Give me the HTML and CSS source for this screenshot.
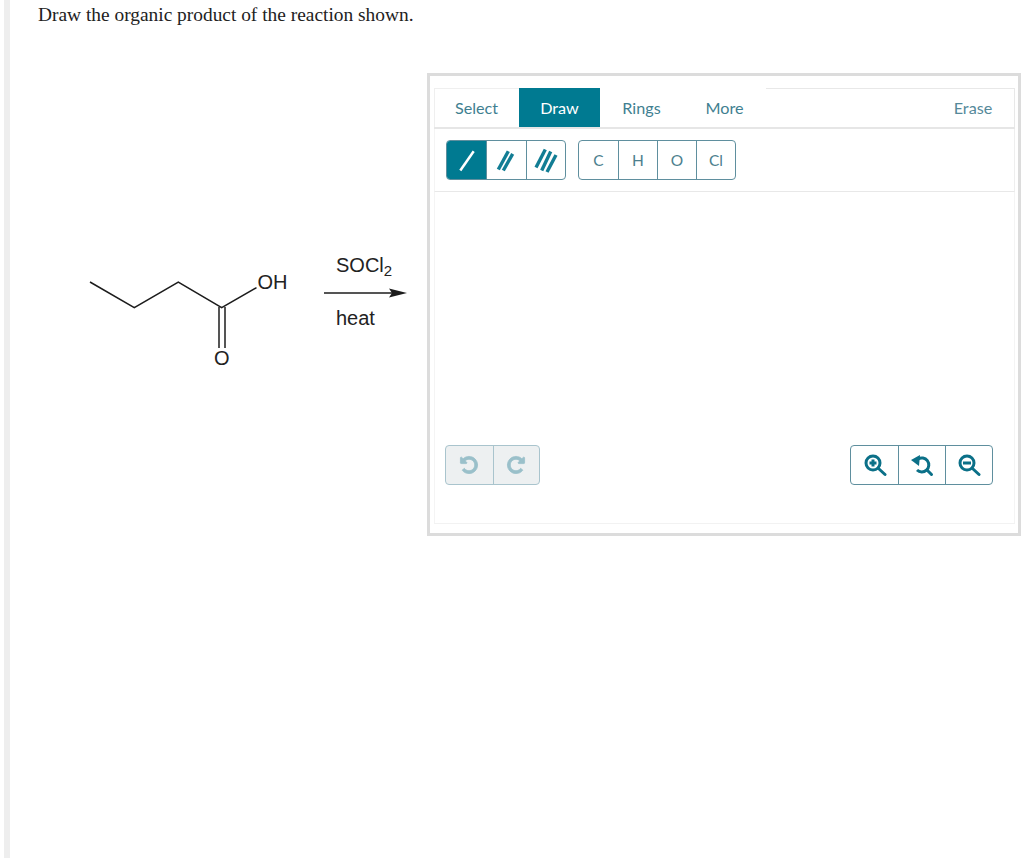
FILE: index.html
```html
<!DOCTYPE html>
<html lang="en">
<head>
<meta charset="utf-8">
<title>Draw the organic product</title>
<link rel="stylesheet" href="styles.css">
</head>
<body>
<main class="page">
  <p class="question">Draw the organic product of the reaction shown.</p>
  <div class="content">
    <svg class="reaction" width="417" height="300" viewBox="0 0 417 300">
      <g transform="translate(-10,-73)">
        <polyline class="bond" points="90,282 134.3,307.7 178.3,282 221.7,307.7 256.5,287.7"/>
        <line class="bond" x1="219" y1="307" x2="219" y2="348"/>
        <line class="bond" x1="225" y1="307" x2="225" y2="348"/>
        <line class="bond" x1="324" y1="293" x2="392" y2="293"/>
        <polygon class="head" points="389,288.5 407,293 389,297.5 392,293"/>
        <text class="chem" x="257.500" y="289">OH</text>
        <text class="chem" x="214" y="365">O</text>
        <text class="chem" x="336" y="272">SOCl<tspan class="sub" dy="4">2</tspan></text>
        <text class="chem" x="336" y="325">heat</text>
      </g>
    </svg>
    <section class="panel">
      <div class="editor">
        <nav class="tabs">
          <button class="tab tab-first">Select</button>
          <button class="tab tab-active">Draw</button>
          <button class="tab">Rings</button>
          <button class="tab">More</button>
          <span class="tab-fill"><button class="tab tab-erase">Erase</button></span>
        </nav>
        <div class="toolbar">
          <div class="group">
            <button class="tool bond-tool tool-active"><svg width="20" height="24" viewBox="0 0 20 24"><line class="ico-white" x1="3.300" y1="22.500" x2="16.700" y2="3.200"/></svg></button>
            <button class="tool bond-tool"><svg width="20" height="24" viewBox="0 0 20 24"><line class="ico" x1="2.300" y1="21.500" x2="12.300" y2="3.200"/><line class="ico" x1="7.300" y1="22.500" x2="16.700" y2="5.800"/></svg></button>
            <button class="tool bond-tool"><svg width="24" height="26" viewBox="0 0 24 26"><line class="ico" x1="2" y1="20.500" x2="11.300" y2="2.500"/><line class="ico" x1="7.700" y1="23.500" x2="16.700" y2="4.500"/><line class="ico" x1="13" y1="25" x2="22" y2="8"/></svg></button>
          </div>
          <div class="group">
            <button class="tool atom">C</button>
            <button class="tool atom">H</button>
            <button class="tool atom">O</button>
            <button class="tool atom">Cl</button>
          </div>
        </div>
        <div class="canvas">
          <div class="group group-off">
            <button class="tool hist off"><svg class="flip-undo" width="20" height="20" viewBox="0 0 1792 1792"><path class="fill" d="M1664 896q0 156-61 298t-164 245-245 164-298 61q-147 0-284.500-55.500t-244.500-156.500l-130 129q-29 31-70 14-39-17-39-59v-448q0-26 19-45t45-19h448q42 0 59 40 17 39-14 69l-137 138q71 66 161 102t187 36q104 0 198.500-40.500t163.500-109.500 109.500-163.500 40.500-198.500-40.500-198.500-109.500-163.500-163.500-109.500-198.500-40.500q-119 0-225 52t-179 147q-7 10-23 12-14 0-25-9l-137-138q-9-8-9.500-20.500t7.500-22.500q109-132 264-204.500t327-72.500q156 0 298 61t245 164 164 245 61 298z"/></svg></button>
            <button class="tool hist off"><svg class="flip-redo" width="20" height="20" viewBox="0 0 1792 1792"><path class="fill" d="M1664 896q0 156-61 298t-164 245-245 164-298 61q-147 0-284.500-55.500t-244.500-156.500l-130 129q-29 31-70 14-39-17-39-59v-448q0-26 19-45t45-19h448q42 0 59 40 17 39-14 69l-137 138q71 66 161 102t187 36q104 0 198.500-40.500t163.500-109.500 109.500-163.500 40.500-198.500-40.500-198.500-109.500-163.500-163.500-109.500-198.500-40.500q-119 0-225 52t-179 147q-7 10-23 12-14 0-25-9l-137-138q-9-8-9.500-20.500t7.500-22.500q109-132 264-204.500t327-72.500q156 0 298 61t245 164 164 245 61 298z"/></svg></button>
          </div>
          <div class="group">
            <button class="tool zoom"><svg width="24" height="24" viewBox="0 0 24 24"><circle class="lens" cx="10" cy="10" r="7"/><line class="handle" x1="15.500" y1="15.500" x2="22" y2="21.500"/><path class="mark" d="M6.500 10h7M10 6.500v7"/></svg></button>
            <button class="tool zoom"><svg width="24" height="24" viewBox="0 0 24 24"><path class="lens" d="M8 6 A7 7 0 1 1 7 17"/><line class="handle" x1="17" y1="17" x2="21.500" y2="21.500"/><polygon class="solid" points="1,7 10,2 9,13"/></svg></button>
            <button class="tool zoom"><svg width="24" height="24" viewBox="0 0 24 24"><circle class="lens" cx="10" cy="10" r="7"/><line class="handle" x1="15.500" y1="15.500" x2="22" y2="21.500"/><path class="mark" d="M6 10h8"/></svg></button>
          </div>
        </div>
      </div>
    </section>
  </div>
</main>
</body>
</html>
```
FILE: styles.css
```css
* { box-sizing: border-box; }
html, body { margin: 0; height: 100%; background: #fff; overflow: hidden; }
.page {
  height: 858px;
  margin-left: 4px;
  border-left: 6px solid #eeeeee;
  padding-top: 3px;
}
.question {
  margin: 0 0 0 28px;
  height: 70px;
  font: 19.4px/24px "Liberation Serif", serif;
  color: #222;
}
.content { display: flex; align-items: flex-start; }
.reaction { flex: none; display: block; }
.bond { fill: none; stroke: #1c1c1c; stroke-width: 1.5; }
.head { fill: #1c1c1c; }
.chem { font: 20px "Liberation Sans", sans-serif; fill: #222; }
.sub { font-size: 15px; }
.panel {
  width: 594px;
  height: 463px;
  border: 3px solid #dcdcdc;
  padding: 12px 3px 9px 4px;
  background: #fff;
}
.editor {
  height: 100%;
  display: flex;
  flex-direction: column;
  border-bottom: 1px solid #f2f2f2;
}
button { font-family: Lato, sans-serif; margin: 0; padding: 0; background: none; border: 0; }
.tabs { display: flex; height: 41px; border-bottom: 2px solid #e6e6e6; }
.tab {
  width: 83px;
  height: 39px;
  font-size: 16.2px;
  color: #3f7f91;
  background: #fff;
}
.tab-first {
  width: 85px;
  padding: 0 1px 1px 0;
  border-left: 1px solid #efefef;
  border-top: 1px solid #efefef;
}
.tab-active { width: 81px; background: #007a91; color: #fff; }
.tab-fill {
  flex: 1;
  display: flex;
  justify-content: flex-end;
  border-top: 1px solid #e8e8e8;
  border-right: 1px solid #e8e8e8;
}
.tab-erase { width: 82px; height: 38px; padding-bottom: 1px; color: #55899a; }
.toolbar {
  height: 63px;
  display: flex;
  align-items: center;
  gap: 12px;
  padding-left: 11px;
  border-bottom: 1px solid #e8e8e8;
  border-right: 1px solid #eeeeee;
  border-left: 1px solid #f4f4f4;
}
.group {
  display: flex;
  border: 1px solid #5f8f9e;
  border-radius: 4px;
  overflow: hidden;
  background: #fff;
}
.tool {
  height: 38px;
  display: flex;
  align-items: center;
  justify-content: center;
  border-left: 1px solid #5f8f9e;
  font-size: 15.5px;
  color: #4d7f8e;
}
.tool:first-child { border-left: 0; }
.bond-tool { width: 39.330px; }
.tool-active { background: #007a91; }
.atom { width: 39px; }
.ico-white { stroke: #fff; stroke-width: 2.500; }
.ico { stroke: #127d94; stroke-width: 3.400; }
.canvas {
  flex: 1;
  display: flex;
  align-items: flex-end;
  justify-content: space-between;
  padding: 0 21px 38px 10px;
  border-right: 1px solid #f4f4f4;
  border-left: 1px solid #f4f4f4;
}
.hist { width: 46.500px; }
.zoom { width: 47px; }
.flip-undo { transform: scaleY(-1); }
.flip-redo { transform: scale(-1, -1); }
.group-off { border-color: #a9c4cd; background: #edf0f1; }
.off { border-left-color: #a9c4cd; }
.off:first-child { border-left: 0; }
.fill { fill: #9ac0ca; stroke: #9ac0ca; stroke-width: 70; }
.lens { fill: none; stroke: #0b7088; stroke-width: 3; }
.handle { stroke: #0b7088; stroke-width: 3; stroke-linecap: round; }
.mark { fill: none; stroke: #0b7088; stroke-width: 3; }
.solid { fill: #0b7088; }
```
